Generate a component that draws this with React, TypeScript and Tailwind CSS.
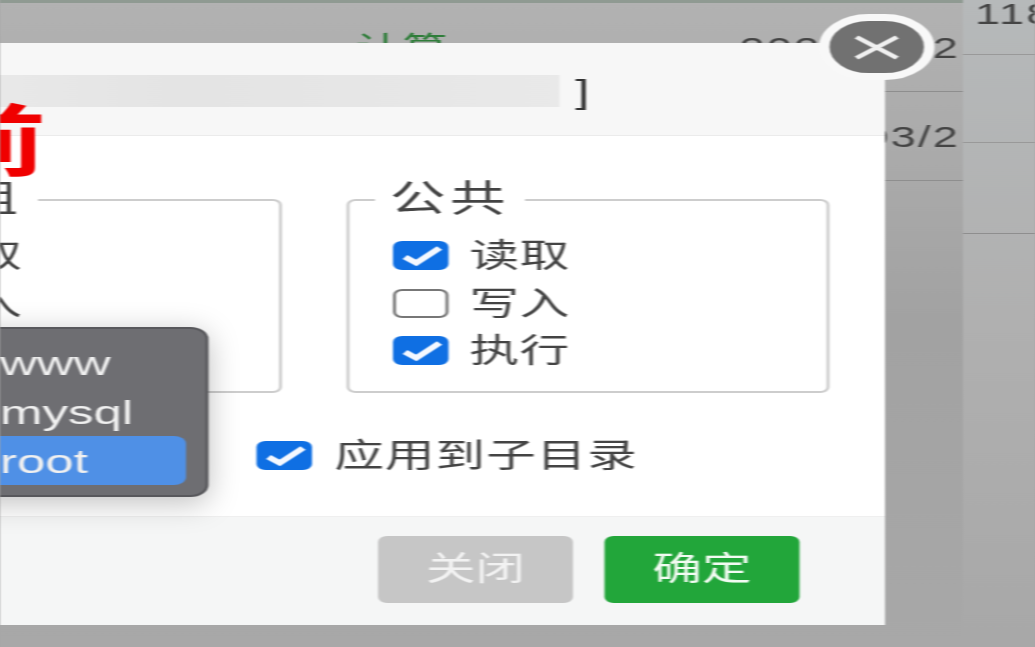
const FONT = "[font-family:'Liberation_Sans','Noto_Sans_CJK_SC',sans-serif]";

function Check({ on }: { on: boolean }) {
  if (!on) {
    return <span className="block w-[37px] h-[29px] shrink-0 rounded-[6px] border-2 border-[#777] bg-white" />;
  }
  return (
    <span className="block w-[37px] h-[29px] shrink-0 rounded-[6px] bg-[#0f6fe3]">
      <svg viewBox="0 0 37 29" className="w-full h-full">
        <polyline points="8,16 15.5,22 31,7" fill="none" stroke="#f4f8ff" strokeWidth="5" />
      </svg>
    </span>
  );
}

function Perm({ label, on }: { label: string; on: boolean }) {
  return (
    <div className="flex items-center gap-[14px] h-[47.5px]">
      <Check on={on} />
      <span className="text-[33px] leading-none tracking-[0.5px] text-[#444]">{label}</span>
    </div>
  );
}

function Group({ title, read, write, exec }: { title: string; read: boolean; write: boolean; exec: boolean }) {
  return (
    <fieldset className="w-[322px] h-[212px] rounded-[6px] border-2 border-[#cdcdcd] px-[29px]">
      <legend className="ml-[-12px] px-[10px] text-[37px] leading-none tracking-[3px] text-[#444]">{title}</legend>
      <div className="pt-[14px]">
        <Perm label="读取" on={read} />
        <Perm label="写入" on={write} />
        <Perm label="执行" on={exec} />
      </div>
    </fieldset>
  );
}

function BgRow({ h, mark, tag, date }: { h: string; mark?: string; tag?: string; date?: string }) {
  return (
    <div className={`${h} grid grid-cols-[160px_1fr_180px] items-center border-b border-[#8e8e8e] pl-[77px] pr-[2px] text-[30px] tracking-[1.5px] text-[#444]`}>
      <span>{mark}</span>
      <span className="text-[#2f7d3a]">{tag}</span>
      <span className="text-right overflow-hidden whitespace-nowrap">{date}</span>
    </div>
  );
}

export default function App() {
  return (
    <div className="w-[1035px] h-[647px] overflow-hidden bg-[#a6a6a6]">
      <div className={`relative w-[690px] h-[647px] origin-top-left scale-x-150 overflow-hidden blur-[0.6px] ${FONT}`}>
        {/* page behind the dialog */}
        <div className="flex h-full">
          <div className="w-[642px] shrink-0 bg-gradient-to-b from-[#b2b2b2] via-[#a2a2a2] to-[#a8a8a8]">
            <div className="h-[3px] bg-[#8f9a92]" />
            <BgRow h="h-[89px]" mark="." tag="计算" date="2023/03/2" />
            <BgRow h="h-[89px]" date="2023/03/2" />
          </div>
          <div className="w-[48px] shrink-0 overflow-hidden bg-gradient-to-b from-[#b6b9ba] via-[#b0b0b0] to-[#a8a8a8]">
            <div className="h-[55px] border-b border-[#999] pl-[8px] text-[30px] leading-[27px] tracking-[1.5px] whitespace-nowrap text-[#444]">118</div>
            <div className="h-[88px] border-b border-[#999]" />
            <div className="h-[91px] border-b border-[#8e8e8e]" />
          </div>
        </div>

        {/* dialog, runs off the left edge */}
        <div className="absolute left-[-200px] top-[43px] w-[790px] h-[582px] flex flex-col bg-white">
          <div className="h-[93px] shrink-0 border-b border-[#ebebeb] bg-[#f7f7f7] flex items-center justify-end pr-[197px] pt-[4px]">
            <div className="w-[500px] h-[32px] bg-gradient-to-r from-[#ededed] via-[#e4e4e4] to-[#e9e9e9]" />
            <span className="ml-[11px] text-[34px] leading-none text-[#333]">]</span>
          </div>
          <div className="flex-1 pt-[45px] pr-[37px]">
            <div className="flex justify-end gap-[43px]">
              <Group title="用户组" read={true} write={false} exec={true} />
              <Group title="公共" read={true} write={false} exec={true} />
            </div>
            <div className="flex items-center gap-[15px] mt-[45px] pl-[371px] h-[34px]">
              <Check on={true} />
              <span className="text-[33px] leading-none tracking-[0.7px] text-[#444]">应用到子目录</span>
            </div>
          </div>
          <div className="h-[109px] shrink-0 border-t border-[#efefef] bg-[#f5f6f6] flex justify-end items-center gap-[21px] pr-[57px] pb-[4px]">
            <button className="w-[130px] h-[67px] rounded-[6px] bg-[#c6c6c6] text-[33px] text-[#f2f2f2]">关闭</button>
            <button className="w-[130px] h-[67px] rounded-[6px] bg-[#22a63a] text-[33px] text-[#f2fbf2]">确定</button>
          </div>
        </div>

        {/* red note over the dialog */}
        <span className="absolute left-[-47px] top-[104px] text-[78px] leading-none font-bold text-[#f00000]">前</span>

        {/* open select menu */}
        <div className="absolute left-[-100px] top-[327px] w-[239px] h-[170px] rounded-[12px] border-2 border-[#58585c] bg-[#6e6e72] py-[9px] pr-[13px] shadow-[0_6px_24px_rgba(0,0,0,0.25)] text-[34px] leading-none text-[#f0f0f0]">
          <div className="h-[49px] flex items-center pl-[98px]">www</div>
          <div className="h-[49px] flex items-center pl-[98px]">mysql</div>
          <div className="h-[49px] flex items-center pl-[98px] rounded-[8px] bg-[#4f90e6]">root</div>
        </div>

        {/* close button */}
        <div className="absolute left-[546px] top-[14px] w-[77px] h-[66px] rounded-full border-[7px] border-[#f8f8f8] bg-[#717171] flex items-center justify-center">
          <svg viewBox="0 0 31 25" className="w-[31px] h-[25px]">
            <path d="M2 2 L29 23 M29 2 L2 23" fill="none" stroke="#f0f0f0" strokeWidth="4" />
          </svg>
        </div>
      </div>
    </div>
  );
}
